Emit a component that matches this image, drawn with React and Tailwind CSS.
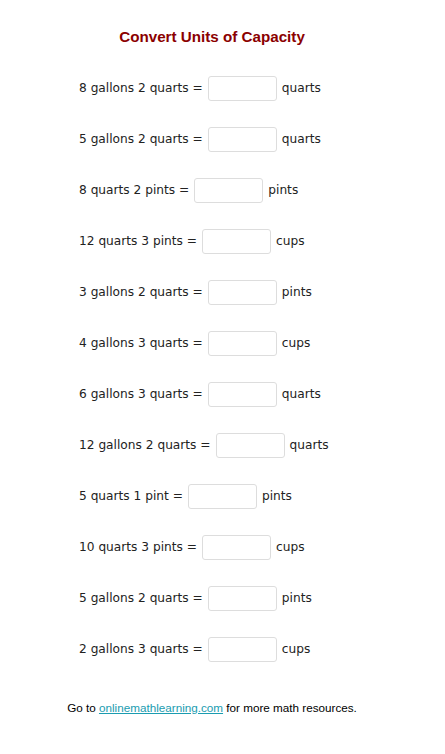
import React from "react";

const rows = [
  ["8 gallons 2 quarts =", "quarts"],
  ["5 gallons 2 quarts =", "quarts"],
  ["8 quarts 2 pints =", "pints"],
  ["12 quarts 3 pints =", "cups"],
  ["3 gallons 2 quarts =", "pints"],
  ["4 gallons 3 quarts =", "cups"],
  ["6 gallons 3 quarts =", "quarts"],
  ["12 gallons 2 quarts =", "quarts"],
  ["5 quarts 1 pint =", "pints"],
  ["10 quarts 3 pints =", "cups"],
  ["5 gallons 2 quarts =", "pints"],
  ["2 gallons 3 quarts =", "cups"],
];

export default function App() {
  return (
    <div className="w-[424px] h-[754px] bg-white">
      <h1 className="pt-[28px] text-center text-[15.2px] font-bold text-[#8b0000] leading-[18px] font-['Liberation_Sans',Arial,sans-serif]">
        Convert Units of Capacity
      </h1>
      <div className="mt-[29px] pl-[79px] flex flex-col gap-[25px] font-['DejaVu_Sans',sans-serif] text-[12.2px] text-[#222]">
        {rows.map(([q, u], i) => (
          <div key={i} className="flex items-center h-[26px]">
            <span>{q}</span>
            <div className="ml-[5px] mr-[5px] w-[69px] h-[25px] border border-[#ddd] rounded-[3px] bg-white" />
            <span>{u}</span>
          </div>
        ))}
      </div>
      <div className="mt-[37px] text-center text-[11.7px] text-black font-['Liberation_Sans',Arial,sans-serif]">
        Go to <a href="#" className="text-[#1a9cb0] underline">onlinemathlearning.com</a> for more math resources.
      </div>
    </div>
  );
}
